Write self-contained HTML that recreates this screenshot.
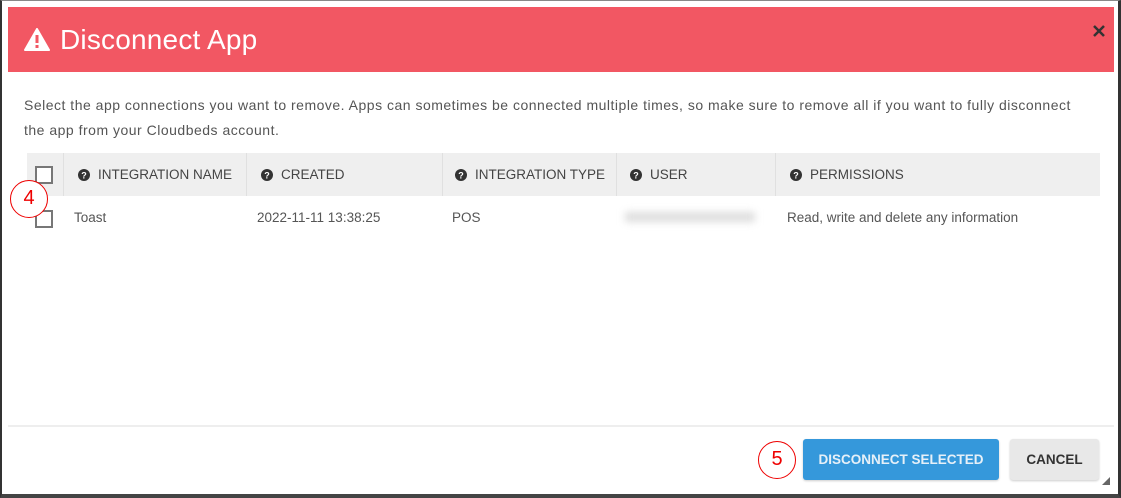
<!DOCTYPE html>
<html><head><meta charset="utf-8"><style>
*{margin:0;padding:0;box-sizing:border-box}
html,body{width:1121px;height:498px;overflow:hidden;background:#fff;font-family:"Liberation Sans",sans-serif}
.frame{position:absolute;left:0;top:0;width:1121px;height:498px;border-left:2px solid #333;border-right:3px solid #333;border-bottom:4px solid #444;border-top:1px solid #888}
.hdr{position:absolute;left:8px;top:7px;width:1106px;height:65px;background:#f25763;color:#fff}
.hdr .t{position:absolute;left:52px;top:17px;font-size:28px;letter-spacing:0.2px}
.hdr svg.warn{position:absolute;left:16px;top:21px}
.x{position:absolute;left:1084px;top:17px}
.desc{position:absolute;left:24px;top:93px;font-size:14px;letter-spacing:0.5px;color:#555;line-height:25px;width:1070px}
.th{position:absolute;left:27px;top:153px;width:1073px;height:43px;background:#efefef}
.div{position:absolute;top:153px;width:1px;height:43px;background:#e0e0e0}
.hc{position:absolute;top:167px;font-size:13.5px;color:#444;display:flex;align-items:center}
.hc svg{margin-right:8px}
.cb{position:absolute;width:18px;height:18px;border:2px solid #777;background:#fff}
.td{position:absolute;top:210px;font-size:13.5px;color:#555}
.circ{position:absolute;width:38px;height:38px;border:1.5px solid #e00;border-radius:50%;color:#e00;font-size:20px;text-align:center;line-height:35px;background:#fff}
.fl{position:absolute;left:8px;top:425px;width:1106px;height:2px;background:#eee}
.btn{position:absolute;top:439px;height:41px;border-radius:3px;font-size:13.5px;font-weight:bold;text-align:center;line-height:41px}
</style></head><body>
<div class="frame"></div>
<div class="hdr">
<svg class="warn" width="26" height="23" viewBox="0 0 26 23"><path d="M13 1 L25 22 L1 22 Z" fill="#fff" stroke="#fff" stroke-width="2" stroke-linejoin="round"/><rect x="11.5" y="7" width="3" height="8" fill="#f25763"/><rect x="11.5" y="17" width="3" height="3" fill="#f25763"/></svg>
<div class="t">Disconnect App</div>
<svg class="x" width="14" height="14" viewBox="0 0 14 14"><path d="M2 2L12 12M12 2L2 12" stroke="#333" stroke-width="2.5"/></svg>
</div>
<div class="desc">Select the app connections you want to remove. Apps can sometimes be connected multiple times, so make sure to remove all if you want to fully disconnect the app from your Cloudbeds account.</div>
<div class="th"></div>
<div class="div" style="left:63px"></div><div class="div" style="left:246px"></div><div class="div" style="left:442px"></div><div class="div" style="left:616px"></div><div class="div" style="left:775px"></div>
<div class="cb" style="left:35px;top:166px"></div>
<div class="cb" style="left:35px;top:210px"></div>
<svg width="0" height="0" style="position:absolute"><defs><g id="q"><circle cx="6" cy="6" r="6" fill="#333"/><text x="6" y="9.5" font-size="9" font-weight="bold" fill="#fff" text-anchor="middle" font-family="Liberation Sans">?</text></g></defs></svg>
<div class="hc" style="left:78px"><svg width="12" height="12"><use href="#q"/></svg>INTEGRATION NAME</div>
<div class="hc" style="left:261px"><svg width="12" height="12"><use href="#q"/></svg>CREATED</div>
<div class="hc" style="left:455px"><svg width="12" height="12"><use href="#q"/></svg>INTEGRATION TYPE</div>
<div class="hc" style="left:630px"><svg width="12" height="12"><use href="#q"/></svg>USER</div>
<div class="hc" style="left:790px"><svg width="12" height="12"><use href="#q"/></svg>PERMISSIONS</div>
<div class="td" style="left:74px">Toast</div>
<div class="td" style="left:257px">2022-11-11 13:38:25</div>
<div class="td" style="left:452px">POS</div>
<div style="position:absolute;left:625px;top:212px;width:130px;height:10px;background:#ddd;filter:blur(4px)"></div>
<div class="td" style="left:787px">Read, write and delete any information</div>
<div class="circ" style="left:10px;top:180px">4</div>
<div class="fl"></div>
<div class="circ" style="left:758px;top:441px">5</div>
<div class="btn" style="left:803px;width:196px;background:#3598db;color:#e6f0f8;box-shadow:0 1px 2px rgba(0,0,0,.2)">DISCONNECT SELECTED</div>
<div class="btn" style="left:1010px;width:89px;background:#e8e8e8;color:#333;box-shadow:0 1px 2px rgba(0,0,0,.2)">CANCEL</div>
<svg style="position:absolute;left:1101px;top:476px" width="10" height="10"><path d="M9 1L9 9L1 9Z" fill="#666"/></svg>
</body></html>
